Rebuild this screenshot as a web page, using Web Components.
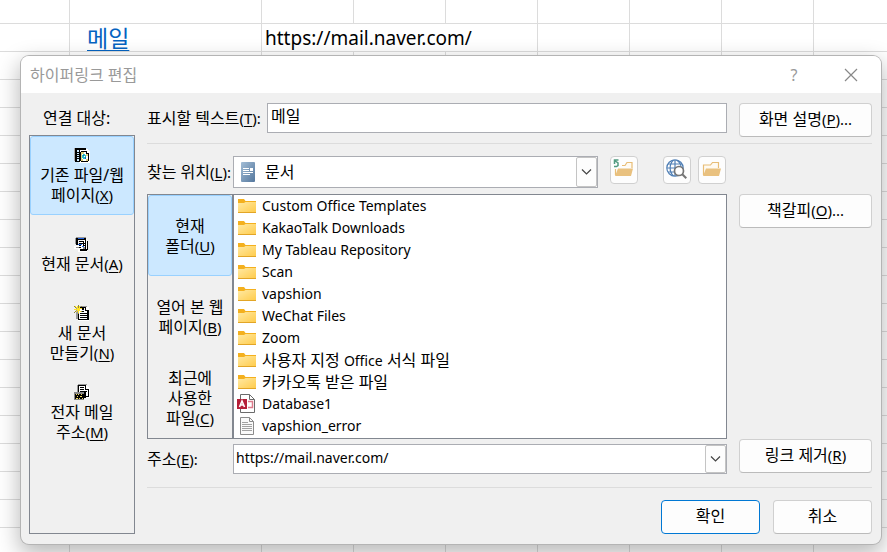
<!DOCTYPE html>
<html lang="ko">
<head>
<meta charset="utf-8">
<meta name="viewport" content="width=device-width, initial-scale=1">
<title>하이퍼링크 편집</title>
<style>
    :root {
        --face: #f0f0f0;
        --line: #828790;
        --field-line: #abadb3;
        --button-line: #d0d0d0;
        --selected: #cce8ff;
        --selected-line: #99d1ff;
        --accent: #0078d4;
        --latin: 14px;
        --key: 15px;
    }

    body {
        margin: 0;
        height: 100vh;
        overflow: hidden;
        position: relative;
        color: #000;
        font: 16px/20px "Noto Sans", "Noto Sans CJK KR", sans-serif;
    }
</style>
</head>
<body>

<work-sheet></work-sheet>

<dialog-window heading="하이퍼링크 편집">
    <link-targets slot="side" heading="연결 대상:">
        <side-item icon="file" selected>기존 파일/웹<br>페이지<hot-key>X</hot-key></side-item>
        <side-item icon="place">현재 문서<hot-key>A</hot-key></side-item>
        <side-item icon="create">새 문서<br>만들기<hot-key>N</hot-key></side-item>
        <side-item icon="mail">전자 메일<br>주소<hot-key>M</hot-key></side-item>
    </link-targets>

    <form-row>
        <text-field value="메일">표시할 텍스트<hot-key after=":">T</hot-key></text-field>
        <push-button slot="action">화면 설명<hot-key after="...">P</hot-key></push-button>
    </form-row>
    <line-rule></line-rule>
    <form-row>
        <look-in value="문서">
            찾는 위치<hot-key after=":">L</hot-key>
            <tool-button slot="up" icon="up" label="한 수준 위로"></tool-button>
            <tool-button slot="tools" icon="web" label="웹 찾아보기"></tool-button>
            <tool-button slot="tools" icon="open" label="파일 찾아보기"></tool-button>
        </look-in>
    </form-row>
    <form-row class="panel">
        <file-browser>
            <side-item slot="tabs" selected>현재<br>폴더<hot-key>U</hot-key></side-item>
            <side-item slot="tabs">열어 본 웹<br>페이지<hot-key>B</hot-key></side-item>
            <side-item slot="tabs">최근에<br>사용한<br>파일<hot-key>C</hot-key></side-item>
            <file-item>Custom Office Templates</file-item>
            <file-item>KakaoTalk Downloads</file-item>
            <file-item>My Tableau Repository</file-item>
            <file-item>Scan</file-item>
            <file-item>vapshion</file-item>
            <file-item>WeChat Files</file-item>
            <file-item>Zoom</file-item>
            <file-item korean>사용자 지정 <latin-text>Office</latin-text> 서식 파일</file-item>
            <file-item korean>카카오톡 받은 파일</file-item>
            <file-item icon="access">Database1</file-item>
            <file-item icon="text">vapshion_error</file-item>
        </file-browser>
        <push-button slot="action">책갈피<hot-key after="...">O</hot-key></push-button>
    </form-row>
    <form-row>
        <text-field class="address" combo value="https://mail.naver.com/">주소<hot-key after=":">E</hot-key></text-field>
        <push-button slot="action">링크 제거<hot-key>R</hot-key></push-button>
    </form-row>
    <line-rule class="last"></line-rule>

    <push-button slot="footer" primary>확인</push-button>
    <push-button slot="footer">취소</push-button>
</dialog-window>

<script type="module">
    const RESET = `
        *, *::before, *::after { box-sizing: border-box; }
        :host { display: block; box-sizing: border-box; }
        button, input, select { margin: 0; font: inherit; color: inherit; }
        svg { display: block; flex: none; }
    `;

    const CHEVRON = `<svg width="13" height="8" viewBox="0 0 13 8" fill="none" stroke="#444" stroke-width="1.2"><path d="M2 1.5 6.5 6 11 1.5"/></svg>`;

    // 16px two-tone document icons, one rect per run of pixels
    const SHEET = `<path fill="#fff" d="M4 1h9v1h2v14H4z"/>
        <path fill="#999" d="M3 1h10v1H3zM2 3h2v11H2z"/>
        <path fill="#000" d="M3 2h9v1H5v11h9V5h1v10H4V4H3zM11 3h1v2h2v1h-3z"/>`;

    const ICONS = {
        file: `<g shape-rendering="crispEdges"><path fill="#aaa" d="M0 1h2v13H0z"/><path fill="#fff" d="M5 2h9l2 3v11H5z"/>
            <path d="M1 1h11v2H1zM1 3h2v12H1zM3 5h2v1H3zM3 7h2v1H3zM3 9h2v1H3zM3 11h2v1H3zM3 14h3v1H3zM5 3h1v11H5zM7 4h6v1H7zM6 5h1v9H6zM7 14h7v1H7zM14 6h1v8h-1zM12 4h1v2h2v1h-3z"/>
            <path fill="#dfd27a" d="M7 5h3v2H7zM7 7h1v5H7zM12 7h2v2h-2zM7 12h2v2H7zM12 12h2v2h-2z"/>
            <path fill="#28bfc6" d="M9 7h2v1h1v3h-1v1H9v-1H8V8h1z"/><path fill="#1764bd" d="M9 8h1v1H9zM11 10h1v2h-1z"/><path fill="#fff" d="M10 9h1v1h-1z"/></g>`,
        place: `<g shape-rendering="crispEdges"><path fill="#999" d="M2 1h10v1H2zM1 2h1v6H1z"/><path fill="#fff" d="M10 3h3v13H4v-3H0v-3h4z"/>
            <path d="M2 2h10v2H2zM2 4h2v4H2zM5 5h5v1H5zM11 4h1v10h-1zM5 7h6v1H5zM5 9h2v1H5zM9 9h3v1H9zM5 11h2v1H5zM6 13h7v2H6zM13 5h1v9h-1zM9 6h1v4H9zM2 8h2v1H2z"/>
            <path fill="#2463dc" d="M4 2h6v1H4zM4 8h4v1H4zM8 10h2v1H8z"/><path fill="#888" d="M9 11h2v2H9zM2 11h3v1H2z"/></g>`,
        create: `<g shape-rendering="crispEdges">${SHEET}<path d="M6 6h4v1H6zM6 8h7v1H6zM6 10h7v1H6zM6 12h7v1H6zM8 3h2v2H8zM13 5h1v9h-1z"/>
            <path fill="#8d8440" d="M0 1h1v1h1v1H1V2H0zM4 0h1v9H4zM0 7h1V6h1v1H1v1H0zM7 1h1v1H7zM7 6h1v1H7z"/>
            <path fill="#ffe326" d="M1 1h1v1H1zM2 2h1v1H2zM3 1h1v2h1V1h1v2h2v1H6v2H5v2H4V6H3V5H0V4h3V3H2V2h1zM2 6h1v1H2zM6 6h1v1H6z"/></g>`,
        mail: `<g shape-rendering="crispEdges"><path fill="#999" d="M4 0h9v1H4zM3 1h1v8H3z"/><path fill="#fff" d="M5 2h8l3 2v10H5z"/>
            <path d="M4 1h8v1H4zM4 2h1v7H4zM6 3h4v1H6zM6 5h4v1H6zM6 7h7v1H6zM11 2h1v3h2v1h-3zM14 5h1v8h-1zM10 8h2v6h-2zM12 12h3v1h-3z"/>
            <path fill="#888" d="M0 8h10v8H0z"/><path d="M1 10h9v5H1z"/>
            <path fill="#f3dd61" d="M2 10h1v1H2zM4 10h1v1H4zM7 10h1v1H7zM3 12h1v1H3zM6 12h2v1H6zM2 14h2v1H2zM5 14h1v1H5zM8 14h1v1H8z"/></g>`,
    };

    const TOOLS = {
        up: `<path fill="#fffaf1" stroke="#e8bd76" stroke-width="1.2" d="M2.500 16V10M9 6.500h3l2-3h5V9"/><path fill="#e9c17f" d="M5 9.500h15L18 17H2z"/><path fill="none" stroke="#529b80" stroke-width="1.500" d="M5.500 1H1.500v4M1.500 1.500 5 4v2.500L3.500 7.500H1"/>`,
        web: `<g fill="none" stroke="#4f7fb5" stroke-width="1.2"><circle cx="9" cy="9" r="8.2"/><path d="M9 1v16M1 9h16M2 5h14M2 13h9M7.5 1C3 5 3 13 7.5 17M10.5 1c3 2 4.500 5 4.500 7"/></g><circle cx="13" cy="12" r="4.500" fill="#fff" stroke="#757575" stroke-width="1.7"/><path d="m16.300 15.300 4 4" stroke="#757575" stroke-width="2"/>`,
        open: `<path fill="#fffaf1" stroke="#e8bd76" stroke-width="1.2" d="M2.500 16V6h7l2-2.500h6V9"/><path fill="#e9c17f" d="M5 9.500h15L18 17H2z"/>`,
    };

    const FILES = {
        folder: `<svg width="20" height="18" viewBox="0 0 20 18"><defs><linearGradient id="g" x1="0" y1="0" x2="1" y2="1"><stop stop-color="#ffe9a3"/><stop offset="1" stop-color="#ffcc4d"/></linearGradient></defs>
            <path fill="#f4b01e" d="M1 2h6l1.500 2H19v3H1z"/><path fill="url(#g)" d="M1 6h6l1.500-1H19v10H1z"/><path fill="#e2a526" d="M1 15h18v1H1z"/></svg>`,
        access: `<svg width="20" height="20" viewBox="0 0 20 20"><path fill="#fff" stroke="#6b6b6b" d="M3.500.500h9l5 5v13h-14z"/><path fill="none" stroke="#6b6b6b" d="M12.500.500v5h5"/><path fill="none" stroke="#dd7b8c" stroke-width="1.500" d="M11 7.500h4.500v6H11"/>
            <path fill="#b51f38" d="M0 5h10v10H0z"/><path fill="none" stroke="#fff" stroke-width="1.600" d="M2.500 13 5 7l2.500 6M3.500 11h3"/></svg>`,
        text: `<svg width="20" height="20" viewBox="0 0 20 20"><path fill="#fafafa" stroke="#8b8b8b" d="M3.500 1.500h9l4 4v13h-13z"/><path fill="none" stroke="#8b8b8b" d="M12.500 1.500v4h4"/><path stroke="#a2a2a2" d="M5 6.500h6M5 8.500h10M5 10.500h10M5 12.500h10M5 14.500h10"/></svg>`,
    };

    function define(name, css, markup, ready) {
        customElements.define(
            name,
            class extends HTMLElement {
                connectedCallback() {
                    if (this.shadowRoot) return;
                    const root = this.attachShadow({ mode: "open" });
                    root.innerHTML = `<style>${RESET}${css}</style>${markup(this)}`;
                    ready?.(this, root);
                }
            },
        );
    }

    // inline helpers, line-height 0 keeps them from growing the line
    define("latin-text", `:host { display: inline; font-size: var(--latin); line-height: 0; }`, () => `<slot></slot>`);

    define(
        "hot-key",
        `:host { display: inline; font-size: var(--key); line-height: 0; } u { text-underline-offset: 2px; }`,
        (el) => `(<u><slot></slot></u>)${el.getAttribute("after") ?? ""}`,
    );

    define(
        "line-rule",
        `:host { height: 1px; margin: 6px 0 12px; background: #dcdcdc; } :host(.last) { margin-top: 13px; }`,
        () => "",
    );

    // spreadsheet behind the dialog
    define(
        "work-sheet",
        `
        :host { height: 100%; overflow: hidden; background: #fff; }
        table { width: 100%; table-layout: fixed; border-collapse: separate; border-spacing: 0; }
        col.first { width: 70px; }
        col.wide { width: 192px; }
        col.cell { width: 92px; }
        td { height: 28px; padding: 0 3px; line-height: 26px; border-right: 1px solid #dcdcdc; border-bottom: 1px solid #dcdcdc; white-space: nowrap; }
        td:last-child { border-right: 0; }
        tr:first-child td { height: 24px; }
        .name { padding-left: 17px; font-size: 23px; }
        .address { font-size: 19px; }
        a { color: #0563c1; text-decoration-thickness: 1px; text-underline-offset: 3px; }
        `,
        () => {
            const blank = `<tr>${"<td></td>".repeat(9)}</tr>`;
            return `<table>
                <colgroup><col class="first"><col class="wide"><col class="cell" span="6"><col></colgroup>
                <tbody>${blank}
                <tr><td></td><td class="name"><a href="https://mail.naver.com/">메일</a></td><td class="address" colspan="3">https://mail.naver.com/</td>${"<td></td>".repeat(4)}</tr>
                ${blank.repeat(20)}</tbody>
            </table>`;
        },
    );

    define(
        "dialog-window",
        `
        :host {
            position: absolute;
            inset: 56px 6px auto 21px;
            overflow: hidden;
            border-radius: 8px;
            background: var(--face);
            box-shadow: 0 0 0 1px #b4b4b4, 0 8px 22px 2px rgba(0, 0, 0, 0.28);
        }
        header { display: flex; align-items: center; height: 37px; padding: 0 7px 0 9px; background: #fff; color: #999; }
        h1 { flex: 1; margin: 0; font-size: 16px; font-weight: normal; }
        header button { display: grid; place-items: center; width: 46px; height: 32px; padding: 0; border: 0; background: none; }
        header button + button { margin-left: 11px; }
        .body { display: grid; grid-template-columns: 106px minmax(0, 1fr); gap: 12px; padding: 10px 9px 10px 8px; }
        footer { display: flex; justify-content: flex-end; gap: 13px; }
        footer ::slotted(*) { width: 99px; }
        `,
        (el) => `
        <header>
            <h1>${el.getAttribute("heading")}</h1>
            <button type="button" aria-label="도움말">?</button>
            <button type="button" aria-label="닫기"><svg width="14" height="14" viewBox="0 0 14 14" stroke="#888" stroke-width="1.2"><path d="m1 1 12 12M13 1 1 13"/></svg></button>
        </header>
        <div class="body">
            <slot name="side"></slot>
            <main><slot></slot><footer><slot name="footer"></slot></footer></main>
        </div>`,
    );

    define(
        "link-targets",
        `
        :host { display: flex; flex-direction: column; }
        h2 { height: 32px; margin: 0; padding: 0 14px; font-size: 16px; font-weight: normal; line-height: 30px; white-space: nowrap; }
        nav { flex: 1; border: 1px solid var(--line); }
        nav ::slotted(*) { height: 79px; }
        `,
        (el) => `<h2>${el.getAttribute("heading")}</h2><nav><slot></slot></nav>`,
    );

    define(
        "side-item",
        `
        button {
            display: flex;
            flex-direction: column;
            align-items: center;
            justify-content: center;
            gap: 2px;
            width: 100%;
            height: 100%;
            padding: 0;
            border: 1px solid transparent;
            border-radius: 3px;
            background: none;
            white-space: nowrap;
        }
        :host([selected]) button { border-color: var(--selected-line); background: var(--selected); }
        `,
        (el) => {
            const icon = ICONS[el.getAttribute("icon")];
            return `<button type="button" aria-pressed="${el.hasAttribute("selected")}">
                ${icon ? `<svg width="16" height="16" viewBox="0 0 16 16">${icon}</svg>` : ""}<span><slot></slot></span></button>`;
        },
    );

    define(
        "form-row",
        `
        :host { display: grid; grid-template-columns: minmax(0, 1fr) 133px; column-gap: 12px; align-items: start; }
        :host(.panel) { margin-top: 6px; }
        `,
        () => `<slot></slot><slot name="action"></slot>`,
    );

    define(
        "push-button",
        `
        button {
            display: block;
            width: 100%;
            height: 34px;
            padding: 0 0 2px;
            border: 1px solid var(--button-line);
            border-bottom-color: #bbb;
            border-radius: 4px;
            background: #fdfdfd;
            white-space: nowrap;
        }
        :host([primary]) button { border-color: var(--accent); }
        `,
        () => `<button type="button"><slot></slot></button>`,
    );

    define(
        "tool-button",
        `button { display: grid; place-items: center; width: 28px; height: 28px; padding: 0; border: 1px solid var(--button-line); border-radius: 4px; background: #fdfdfd; }`,
        (el) => `<button type="button" aria-label="${el.getAttribute("label")}"><svg width="22" height="22" viewBox="0 0 22 22">${TOOLS[el.getAttribute("icon")]}</svg></button>`,
    );

    define(
        "text-field",
        `
        :host { display: flex; align-items: center; }
        :host(.address) { padding-top: 5px; }
        label { width: 120px; white-space: nowrap; }
        :host(.address) label { width: 86px; }
        .box { display: flex; flex: 1; height: 30px; border: 1px solid var(--field-line); background: #fff; }
        input { flex: 1; min-width: 0; padding: 0 3px 4px; border: 0; outline: 0; background: none; }
        :host(.address) input { padding: 0 2px 2px; font-size: var(--latin); }
        button { display: grid; place-items: center; width: 21px; padding: 0; border: 1px solid #c4c4c4; border-radius: 2px; background: #fdfdfd; }
        `,
        (el) => `<label for="field"><slot></slot></label>
        <div class="box"><input id="field" type="text" value="${el.getAttribute("value")}">${el.hasAttribute("combo") ? `<button type="button" aria-label="목록 열기">${CHEVRON}</button>` : ""}</div>`,
    );

    define(
        "look-in",
        `
        :host { display: flex; align-items: start; padding-right: 1px; }
        label { width: 86px; line-height: 32px; white-space: nowrap; }
        .box { display: grid; grid-template-columns: 30px minmax(0, 1fr) 21px; align-items: center; flex: 1; height: 32px; border: 1px solid var(--field-line); background: #fff; }
        .box > * { grid-row: 1; }
        .box svg { pointer-events: none; }
        .book { grid-column: 1; justify-self: center; margin-right: 2px; }
        .arrow { grid-column: 3; display: grid; place-items: center; height: 30px; border: 1px solid #c4c4c4; border-radius: 2px; background: #fdfdfd; pointer-events: none; }
        select { grid-column: 1 / -1; width: 100%; height: 30px; padding: 0 24px 0 31px; border: 0; outline: 0; background: none; appearance: none; }
        .tools { display: flex; gap: 7px; margin-left: 12px; }
        .tools + .tools { margin-left: 25px; }
        `,
        (el) => `<label for="place"><slot></slot></label>
        <div class="box">
            <svg class="book" width="14" height="20" viewBox="0 0 14 20"><defs><linearGradient id="b" x2="1" y2="1"><stop stop-color="#a2bdd6"/><stop offset="1" stop-color="#54779d"/></linearGradient></defs>
                <rect width="14" height="20" rx="1" fill="url(#b)"/><path fill="#fff" d="M2 6h6v1H2zM2 8h6v1H2zM2 10h10v1H2zM2 12h7v1H2zM9 6h3v3H9z"/></svg>
            <select id="place"><option>${el.getAttribute("value")}</option></select>
            <span class="arrow">${CHEVRON}</span>
        </div>
        <div class="tools"><slot name="up"></slot></div>
        <div class="tools"><slot name="tools"></slot></div>`,
    );

    define(
        "file-browser",
        `
        :host { display: grid; grid-template-columns: 85px minmax(0, 1fr); }
        .tabs { display: grid; grid-template-rows: repeat(3, 81px); border: 1px solid var(--line); border-right: 0; }
        .files { border: 1px solid var(--line); border-left-width: 2px; background: #fff; }
        `,
        () => `<div class="tabs"><slot name="tabs"></slot></div><div class="files" role="list"><slot></slot></div>`,
        (el) => el.querySelectorAll("file-item").forEach((item) => item.setAttribute("role", "listitem")),
    );

    define(
        "file-item",
        `
        :host { display: flex; align-items: center; gap: 5px; height: 22px; padding-left: 3px; font-size: var(--latin); white-space: nowrap; }
        :host([korean]) { font-size: 16px; }
        `,
        (el) => `${FILES[el.getAttribute("icon") ?? "folder"]}<span><slot></slot></span>`,
    );
</script>
</body>
</html>
